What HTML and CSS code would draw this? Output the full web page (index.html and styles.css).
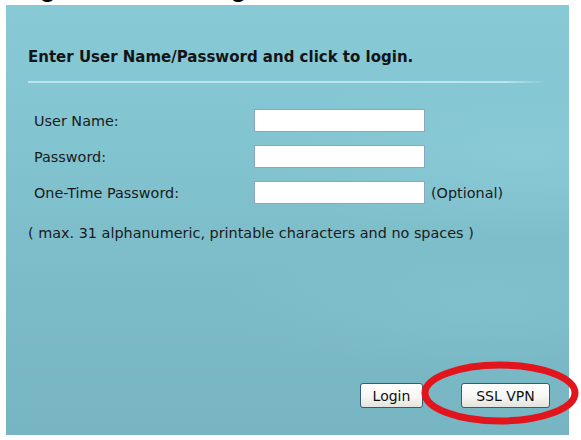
FILE: index.html
```html
<!DOCTYPE html>
<html lang="en">
<head>
<meta charset="utf-8">
<title>Login</title>
<link rel="stylesheet" href="styles.css">
</head>
<body>
  <h1 class="page-title">Login to the Configurator</h1>

  <div class="login-panel">
    <h2 class="panel-heading">Enter User Name/Password and click to login.</h2>
    <div class="divider"></div>

    <form class="login-form" onsubmit="return false;">
      <label class="field-label" for="user">User Name:</label>
      <input class="field-input" id="user" type="text">
      <span></span>

      <label class="field-label" for="pass">Password:</label>
      <input class="field-input" id="pass" type="password">
      <span></span>

      <label class="field-label" for="otp">One-Time Password:</label>
      <input class="field-input" id="otp" type="password">
      <span class="field-hint">(Optional)</span>
    </form>

    <p class="field-note">( max. 31 alphanumeric, printable characters and no spaces )</p>

    <div class="actions">
      <button class="btn btn-login" type="button">Login</button>
      <button class="btn btn-vpn" type="button">SSL VPN</button>
    </div>

    <svg class="callout" width="160" height="66" viewBox="0 0 160 66" aria-hidden="true">
      <ellipse cx="80" cy="33" rx="75" ry="28" fill="none" stroke="#e2141c" stroke-width="7"/>
    </svg>
  </div>
</body>
</html>
```

FILE: styles.css
```css
html, body {
  margin: 0;
  padding: 0;
  background: #ffffff;
  overflow: hidden;
}

body {
  width: 581px;
  height: 440px;
  font-family: "DejaVu Sans", Verdana, sans-serif;
  color: #111;
}

/* page heading, scrolled mostly out of view above the panel */
.page-title {
  margin: -27px 0 2px 8px;
  font-family: "Liberation Sans", Arial, sans-serif;
  font-size: 26px;
  line-height: 30px;
  font-weight: bold;
  color: #000;
  white-space: nowrap;
}

.login-panel {
  position: relative;
  box-sizing: border-box;
  margin-left: 6px;
  width: 563px;
  height: 430px;
  padding: 43px 19px 27px 22px;
  display: flex;
  flex-direction: column;
  background:
    radial-gradient(ellipse 420px 120px at 520px 150px, rgba(150, 214, 224, 0.35), rgba(150, 214, 224, 0) 70%),
    radial-gradient(ellipse 380px 90px at 480px 300px, rgba(140, 206, 218, 0.3), rgba(140, 206, 218, 0) 70%),
    linear-gradient(180deg, #87cad6 0%, #82c3d0 35%, #7bbac7 70%, #77b5c3 100%);
}

.panel-heading {
  margin: 0;
  font-size: 15px;
  line-height: 18px;
  font-weight: bold;
  color: #141414;
}

.divider {
  margin-top: 15px;
  width: 518px;
  height: 2px;
  background: linear-gradient(90deg, rgba(196, 232, 238, 0.9) 0%, rgba(196, 232, 238, 0.9) 92%, rgba(196, 232, 238, 0) 100%);
}

.login-form {
  margin-top: 26px;
  padding-left: 6px;
  display: grid;
  grid-template-columns: 214px 171px auto;
  grid-auto-rows: 23px;
  row-gap: 13px;
  column-gap: 6px;
  align-items: center;
}

.field-label,
.field-hint,
.field-note {
  font-size: 14.4px;
  line-height: 18px;
  color: #1a1a1a;
}

.field-input {
  box-sizing: border-box;
  width: 171px;
  height: 23px;
  margin: 0;
  padding: 2px 3px;
  border: 1px solid #8aa7bd;
  background: #ffffff;
  font: 13px "DejaVu Sans", Verdana, sans-serif;
  outline: none;
}

.field-note {
  margin: 20px 0 0 0;
}

.actions {
  margin-top: auto;
  display: flex;
  justify-content: flex-end;
  gap: 38px;
}

.btn {
  box-sizing: border-box;
  height: 25px;
  margin: 0;
  padding: 0;
  border: 1px solid #375a78;
  border-radius: 3px;
  background: linear-gradient(180deg, #ffffff 0%, #f6f6f3 55%, #e4e3dc 100%);
  font: 14px "DejaVu Sans", Verdana, sans-serif;
  color: #111;
}

.btn-login { width: 63px; }
.btn-vpn { width: 89px; }

/* red call-out ring drawn over the SSL VPN button */
.callout {
  position: absolute;
  left: 414px;
  top: 355px;
}
```
